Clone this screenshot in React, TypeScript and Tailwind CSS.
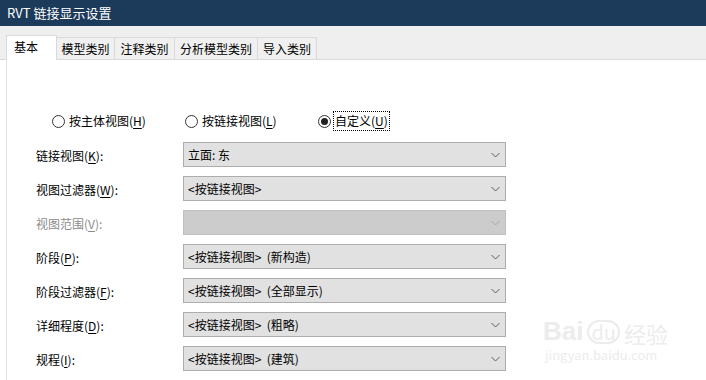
import React from "react";

const font = { fontFamily: '"Noto Sans CJK SC", "Noto Sans", sans-serif' };

function U({ c }: { c: string }) {
  return <span className="underline underline-offset-2 decoration-[1px]">{c}</span>;
}

function Chevron({ disabled }: { disabled?: boolean }) {
  return (
    <svg width="9" height="6" viewBox="0 0 9 6" className="shrink-0">
      <path d="M0.5 1 L4.5 5 L8.5 1" fill="none" stroke={disabled ? "#a8a8a8" : "#5a5a5a"} strokeWidth="1" />
    </svg>
  );
}

function Radio({ checked, children, focus }: { checked?: boolean; children: React.ReactNode; focus?: boolean }) {
  return (
    <div className="flex items-center">
      <div className="w-[13px] h-[13px] rounded-full border border-[#333] bg-white flex items-center justify-center">
        {checked && <div className="w-[7px] h-[7px] rounded-full bg-[#222]" />}
      </div>
      <div className={`ml-[3px] px-[1px] leading-[18px] ${focus ? "outline outline-1 outline-dotted outline-black" : ""}`}>
        {children}
      </div>
    </div>
  );
}

function Row({ label, value, disabled }: { label: React.ReactNode; value?: string; disabled?: boolean }) {
  return (
    <div className="flex items-center h-[25px]">
      <div className={`w-[147px] pt-[2px] ${disabled ? "text-[#8c8c8c]" : "text-black"}`}>{label}</div>
      <div
        className={`w-[323px] h-[25px] flex items-center justify-between pl-[4px] pr-[5px] border ${
          disabled ? "bg-[#cccccc] border-[#bfbfbf]" : "bg-[#e1e1e1] border-[#adadad]"
        }`}
      >
        <span className="whitespace-pre">{value}</span>
        <Chevron disabled={disabled} />
      </div>
    </div>
  );
}

export default function App() {
  const tabs = ["模型类别", "注释类别", "分析模型类别", "导入类别"];
  const tabW = ["w-[58px]", "w-[60px]", "w-[83px]", "w-[59px]"];
  return (
    <div className="w-[706px] h-[380px] overflow-hidden bg-white text-[12px] text-black" style={font}>
      <div className="h-[26px] bg-[#1c3a5a] text-white text-[13px] flex items-center pl-[7px]">RVT 链接显示设置</div>
      <div className="h-[34px] bg-[#efefef] border-b border-[#d9d9d9] flex items-end pl-[6px]">
        <div className="w-[51px] h-[25px] bg-white border border-[#d9d9d9] border-b-0 -mb-[1px] relative z-10 pl-[7px] pt-[2px]">基本</div>
        {tabs.map((t, i) => (
          <div
            key={t}
            className={`${tabW[i]} h-[22px] bg-[#f0f0f0] border border-[#d9d9d9] border-b-0 border-l-0 flex items-center justify-center pt-[1px]`}
          >
            {t}
          </div>
        ))}
      </div>
      <div className="ml-[6px] border-l border-[#e3e3e3] h-[320px] relative">
        <div className="flex items-center pt-[52px] pl-[45px]">
          <div className="w-[133px]">
            <Radio>
              按主体视图(<U c="H" />)
            </Radio>
          </div>
          <div className="w-[133px]">
            <Radio>
              按链接视图(<U c="L" />)
            </Radio>
          </div>
          <Radio checked focus>
            自定义(<U c="U" />)
          </Radio>
        </div>
        <div className="pl-[29px] pt-[12px] flex flex-col gap-[9px]">
          <Row label={<>链接视图(<U c="K" />):</>} value="立面: 东" />
          <Row label={<>视图过滤器(<U c="W" />):</>} value="<按链接视图>" />
          <Row label={<>视图范围(<U c="V" />):</>} disabled />
          <Row label={<>阶段(<U c="P" />):</>} value="<按链接视图>  (新构造)" />
          <Row label={<>阶段过滤器(<U c="F" />):</>} value="<按链接视图>  (全部显示)" />
          <Row label={<>详细程度(<U c="D" />):</>} value="<按链接视图>  (粗略)" />
          <Row label={<>规程(<U c="I" />):</>} value="<按链接视图>  (建筑)" />
        </div>
        <div className="absolute left-[536px] top-[258px] text-[#ececec] leading-none select-none">
          <div className="flex items-end gap-[4px]">
            <span className="text-[26px] font-bold" style={{ fontFamily: "Arial, sans-serif" }}>Bai</span>
            <span className="text-[20px] border-2 border-[#ececec] rounded-full px-[2px]">du</span>
            <span className="text-[22px]">经验</span>
          </div>
          <div className="text-[13px] mt-[4px] ml-[2px]">jingyan.baidu.com</div>
        </div>
      </div>
    </div>
  );
}
